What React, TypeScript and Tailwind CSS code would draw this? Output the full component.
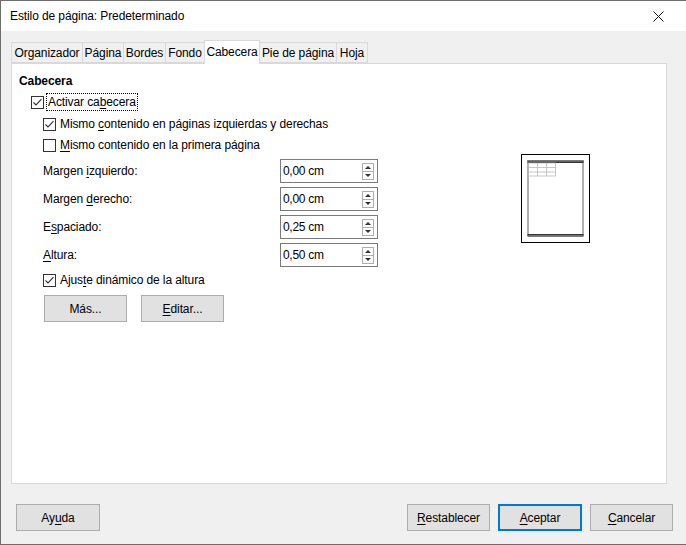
import React from "react";

const font = { fontFamily: '"Liberation Sans", Arial, sans-serif' };

function U({ children }: { children: React.ReactNode }) {
  return <span className="underline underline-offset-2">{children}</span>;
}

function CheckBox({ checked }: { checked: boolean }) {
  return (
    <svg width="13" height="13" viewBox="0 0 13 13" className="shrink-0">
      <rect x="0.5" y="0.5" width="12" height="12" fill="#fff" stroke="#333" />
      {checked && (
        <path d="M2.5 6.5 L5 9 L10.5 3.2" fill="none" stroke="#333" strokeWidth="1.1" />
      )}
    </svg>
  );
}

function Spin({ value }: { value: string }) {
  return (
    <div className="w-[98px] h-[24px] border border-[#7a7a7a] bg-white flex items-center pl-[2px] pr-[2px]">
      <span className="flex-1 text-[12px] text-black tracking-[-0.3px]">{value}</span>
      <svg width="12" height="17" viewBox="0 0 12 17" className="mr-[1px]">
        <rect x="0.5" y="0.5" width="11" height="16" fill="#fff" stroke="#adadad" />
        <line x1="1" y1="8.5" x2="11" y2="8.5" stroke="#adadad" />
        <path d="M3 6 L6 3 L9 6 Z" fill="#333" />
        <path d="M3 11 L6 14 L9 11 Z" fill="#333" />
      </svg>
    </div>
  );
}

function FieldRow({ label, value }: { label: React.ReactNode; value: string }) {
  return (
    <div className="flex items-center h-[24px] pl-[24px]">
      <div className="w-[237px] text-[12px]">{label}</div>
      <Spin value={value} />
    </div>
  );
}

function Btn({ children, w = "w-[84px]", primary = false }: { children: React.ReactNode; w?: string; primary?: boolean }) {
  return (
    <div
      className={
        "h-[27px] flex items-center justify-center text-[12px] bg-[#e1e1e1] " +
        w +
        (primary ? " border-2 border-[#0078d7]" : " border border-[#adadad]")
      }
    >
      {children}
    </div>
  );
}

const tabs = [
  { t: "Organizador", w: "w-[72px]" },
  { t: "Página", w: "w-[42px]" },
  { t: "Bordes", w: "w-[43px]" },
  { t: "Fondo", w: "w-[40px]" },
  { t: "Cabecera", w: "w-[56px]", sel: true },
  { t: "Pie de página", w: "w-[78px]" },
  { t: "Hoja", w: "w-[32px]" },
];

function Preview() {
  return (
    <svg width="69" height="89" viewBox="0 0 69 89">
      <rect x="0.5" y="0.5" width="68" height="88" fill="#fff" stroke="#000" />
      {/* page sides */}
      <line x1="7" y1="6" x2="7" y2="82" stroke="#7a7a7a" strokeWidth="1.2" />
      <line x1="62" y1="6" x2="62" y2="82" stroke="#7a7a7a" strokeWidth="1.2" />
      {/* header band */}
      <rect x="6.5" y="6" width="56" height="1.3" fill="#7a7a7a" />
      <rect x="6.5" y="7.3" width="56" height="1.7" fill="#333" />
      {/* footer band */}
      <rect x="6.5" y="80" width="56" height="1.7" fill="#333" />
      <rect x="6.5" y="81.7" width="56" height="1.3" fill="#7a7a7a" />
      {/* grid */}
      <g stroke="#b8b8b8" strokeWidth="0.8" fill="none">
        <rect x="7.5" y="9" width="27" height="13" />
        <line x1="16.5" y1="9" x2="16.5" y2="22" />
        <line x1="25.5" y1="9" x2="25.5" y2="22" />
        <line x1="7.5" y1="13.5" x2="34.5" y2="13.5" />
        <line x1="7.5" y1="18" x2="34.5" y2="18" />
      </g>
    </svg>
  );
}

export default function App() {
  return (
    <div
      className="w-[686px] h-[545px] bg-[#f0f0f0] flex flex-col border-l border-t border-b border-[#6d6d6d] text-black overflow-hidden tracking-[-0.1px]"
      style={font}
    >
      {/* title bar */}
      <div className="h-[30px] bg-white flex items-center pl-[9px] pr-[22px] shrink-0">
        <span className="flex-1 text-[12px]">Estilo de página: Predeterminado</span>
        <svg width="11" height="11" viewBox="0 0 11 11">
          <path d="M0.5 0.5 L10.5 10.5 M10.5 0.5 L0.5 10.5" stroke="#111" strokeWidth="1" />
        </svg>
      </div>

      {/* tabs */}
      <div className="flex items-end pl-[10px] pt-[8px] h-[32px] shrink-0">
        {tabs.map((tab) =>
          tab.sel ? (
            <div
              key={tab.t}
              className={
                tab.w +
                " h-[24px] bg-white border border-b-0 border-[#d9d9d9] flex items-center justify-center text-[12px] -mb-px -ml-px relative z-10 pb-[2px]"
              }
            >
              {tab.t}
            </div>
          ) : (
            <div
              key={tab.t}
              className={
                tab.w +
                " h-[21px] bg-[#f0f0f0] border border-[#d9d9d9] -ml-px first:ml-0 flex items-center justify-center text-[12px]"
              }
            >
              {tab.t}
            </div>
          )
        )}
      </div>

      {/* panel */}
      <div className="ml-[10px] w-[656px] h-[421px] bg-white border border-[#d9d9d9] flex shrink-0">
        <div className="flex flex-col pl-[7px] pt-[9px] w-[366px]">
          <div className="h-[16px] flex items-center text-[12px] font-bold">Cabecera</div>
          <div className="mt-[2px] h-[22px] flex items-center pl-[12px]">
            <CheckBox checked />
            <span className="ml-[2px] px-[1px] h-[18px] flex items-center border border-dotted border-black text-[12px]">
              Activar ca<U>b</U>ecera
            </span>
          </div>
          <div className="h-[22px] flex items-center pl-[24px] gap-[4px] text-[12px]">
            <CheckBox checked />
            <span>
              Mismo <U>c</U>ontenido en páginas izquierdas y derechas
            </span>
          </div>
          <div className="h-[20px] flex items-center pl-[24px] gap-[4px] text-[12px]">
            <CheckBox checked={false} />
            <span>
              <U>M</U>ismo contenido en la primera página
            </span>
          </div>
          <div className="mt-[4px] flex flex-col gap-[4px]">
            <FieldRow label={<>Margen <U>i</U>zquierdo:</>} value="0,00 cm" />
            <FieldRow label={<>Margen <U>d</U>erecho:</>} value="0,00 cm" />
            <FieldRow label={<>E<U>s</U>paciado:</>} value="0,25 cm" />
            <FieldRow label={<><U>A</U>ltura:</>} value="0,50 cm" />
          </div>
          <div className="mt-[3px] h-[20px] flex items-center pl-[24px] gap-[4px] text-[12px]">
            <CheckBox checked />
            <span>
              Ajus<U>t</U>e dinámico de la altura
            </span>
          </div>
          <div className="mt-[5px] flex pl-[25px] gap-[14px]">
            <Btn w="w-[83px]">Más...</Btn>
            <Btn w="w-[83px]">
              <span>
                <U>E</U>ditar...
              </span>
            </Btn>
          </div>
        </div>
        <div className="ml-[143px] mt-[90px]">
          <Preview />
        </div>
      </div>

      {/* bottom buttons */}
      <div className="flex items-center pl-[15px] pr-[13px] mt-[20px]">
        <Btn w="w-[84px]">
          <span>
            Ay<U>u</U>da
          </span>
        </Btn>
        <div className="flex-1" />
        <div className="flex gap-[8px]">
          <Btn w="w-[83px]">
            <span>
              <U>R</U>establecer
            </span>
          </Btn>
          <Btn w="w-[84px]" primary>
            <span>
              <U>A</U>ceptar
            </span>
          </Btn>
          <Btn w="w-[83px]">
            <span>
              <U>C</U>ancelar
            </span>
          </Btn>
        </div>
      </div>
    </div>
  );
}
